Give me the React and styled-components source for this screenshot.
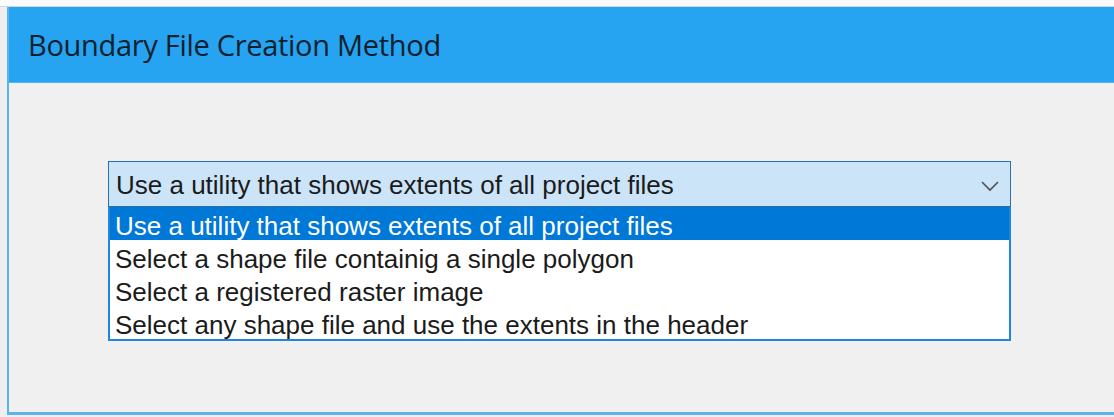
import { useState } from 'react'
import styled, { createGlobalStyle } from 'styled-components'

const GlobalStyle = createGlobalStyle`
  html, body {
    margin: 0;
    padding: 0;
    background: #efefef;
    overflow: hidden;
  }
`

const Desktop = styled.div`
  width: 1114px;
  height: 417px;
  background: #efefef;
  display: flex;
  flex-direction: column;
`

const TopStrip = styled.div`
  height: 6px;
  background: #fbfbfb;
  border-bottom: 1px solid #d6d6d6;
`

const Dialog = styled.div`
  margin-left: 7px;
  flex: 1;
  display: flex;
  flex-direction: column;
  border-left: 2px solid #5ab5ef;
  border-bottom: 3px solid #5ab5ef;
  margin-bottom: 2px;
`

const TitleBar = styled.div`
  height: 76px;
  background: #26a4f1;
  display: flex;
  align-items: center;
  padding-left: 19px;
  box-sizing: border-box;
  border-bottom: 1px solid #4eb6f3;
`

const Title = styled.span`
  font-family: "Open Sans", "Noto Sans", sans-serif;
  font-size: 29px;
  color: #10202c;
  letter-spacing: -0.3px;
`

const Body = styled.div`
  flex: 1;
  background: #f0f0f0;
  padding: 78px 0 0 99px;
`

const Combo = styled.div`
  width: 903px;
  font-family: "Liberation Sans", Arial, sans-serif;
  font-size: 26px;
`

const ComboHead = styled.div`
  height: 46px;
  box-sizing: border-box;
  border: 1px solid #2b6ea8;
  background: #cce4f7;
  color: #1b1b1b;
  display: flex;
  align-items: center;
  justify-content: space-between;
  padding: 3px 10px 0 7px;
`

const List = styled.ul`
  list-style: none;
  margin: 0;
  padding: 0;
  border: 2px solid #1e86dd;
  border-top: none;
  background: #fff;
`

const Option = styled.li`
  height: 33px;
  box-sizing: border-box;
  padding: 6px 0 0 5px;
  line-height: 27px;
  color: ${p => (p.$active ? '#fff' : '#1b1b1b')};
  background: ${p => (p.$active ? '#0078d7' : 'transparent')};
  white-space: nowrap;
  cursor: default;
`

const methods = [
  'Use a utility that shows extents of all project files',
  'Select a shape file containig a single polygon',
  'Select a registered raster image',
  'Select any shape file and use the extents in the header',
]

function Chevron() {
  return (
    <svg width="20" height="12" viewBox="0 0 20 12">
      <path d="M2 2 L10 10 L18 2" fill="none" stroke="#505050" strokeWidth="1.6" />
    </svg>
  )
}

export default function App() {
  const [selected, setSelected] = useState(0)

  return (
    <Desktop>
      <GlobalStyle />
      <TopStrip />
      <Dialog>
        <TitleBar>
          <Title>Boundary File Creation Method</Title>
        </TitleBar>
        <Body>
          <Combo>
            <ComboHead>
              <span>{methods[selected]}</span>
              <Chevron />
            </ComboHead>
            <List>
              {methods.map((m, i) => (
                <Option key={m} $active={i === selected} onMouseDown={() => setSelected(i)}>
                  {m}
                </Option>
              ))}
            </List>
          </Combo>
        </Body>
      </Dialog>
    </Desktop>
  )
}
